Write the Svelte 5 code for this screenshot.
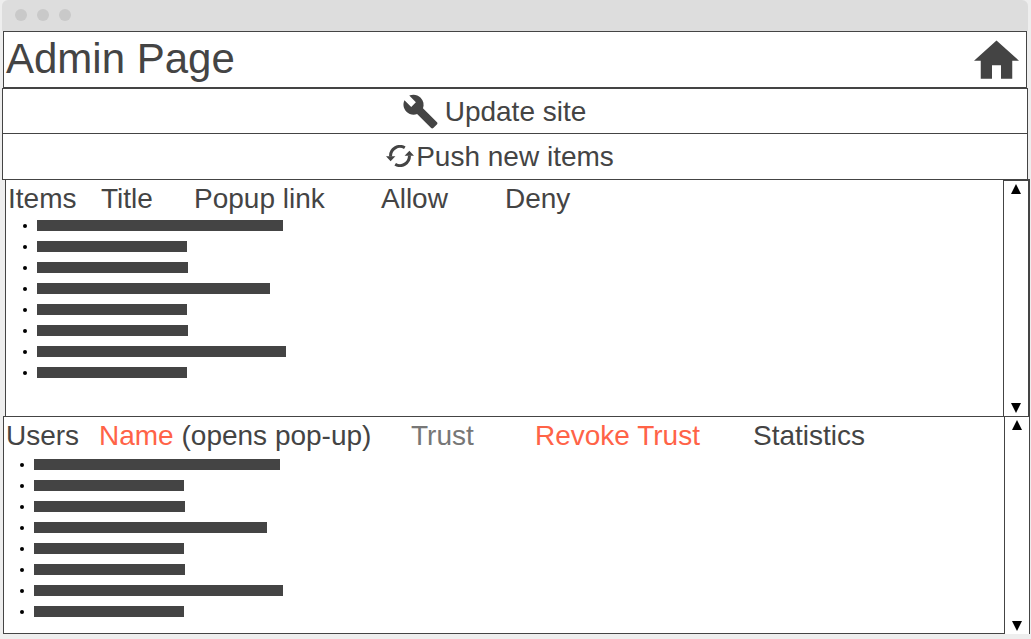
<script>
  const barWidths = [246, 150, 151, 233, 150, 151, 249, 150];
</script>

{#snippet scroller(label)}
  <div class="scroller">
    <button aria-label="Scroll {label} up">
      <svg viewBox="0 0 10 10"><path d="M5 0L10 10H0z" /></svg>
    </button>
    <button aria-label="Scroll {label} down">
      <svg viewBox="0 0 10 10"><path d="M5 10L10 0H0z" /></svg>
    </button>
  </div>
{/snippet}

{#snippet lines()}
  <ul>
    {#each barWidths as width}
      <li><span class="bar" style="width: {width}px"></span></li>
    {/each}
  </ul>
{/snippet}

<div class="window">
  <div class="titlebar"><i></i><i></i><i></i></div>

  <header>
    <h1>Admin Page</h1>
    <a href="#home" aria-label="Home">
      <svg class="home" viewBox="2 3 20 17"><path d="M10 20v-6h4v6h5v-8h3L12 3 2 12h3v8z" /></svg>
    </a>
  </header>

  <button class="action update">
    <svg class="wrench" viewBox="0 0 24 24">
      <path d="M22.7 19l-9.1-9.1c.9-2.3.4-5-1.5-6.9-2-2-5-2.4-7.4-1.3L9 6 6 9 1.6 4.7C.4 7.1.9 10.1 2.9 12.1c1.9 1.9 4.6 2.4 6.9 1.5l9.1 9.1c.4.4 1 .4 1.4 0l2.3-2.3c.5-.4.5-1.1.1-1.4z" />
    </svg>
    Update site
  </button>
  <button class="action push">
    <svg class="refresh" viewBox="0 0 28 22">
      <path class="arc" d="M4.6 11.5A9.4 9.4 0 0 1 18.8 2.8M23.4 10.5A9.4 9.4 0 0 1 9.2 19.2" />
      <path d="M0 11.3H9.4L4.6 16.3zM28 10.7H18.6L23.4 5.7z" />
    </svg>
    Push new items
  </button>

  <section class="items">
    <div class="content">
      <div class="columns">
        <h2>Items</h2>
        <span>Title</span>
        <span>Popup link</span>
        <span>Allow</span>
        <span>Deny</span>
      </div>
      {@render lines()}
    </div>
    {@render scroller("items")}
  </section>

  <section class="users">
    <div class="content">
      <div class="columns">
        <h2>Users</h2>
        <span><em>Name</em> (opens pop-up)</span>
        <span class="muted">Trust</span>
        <em>Revoke Trust</em>
        <span>Statistics</span>
      </div>
      {@render lines()}
    </div>
    {@render scroller("users")}
  </section>
</div>

<style>
  :global(body) {
    margin: 0;
    background: #eee;
  }

  .window {
    margin: 0 3px 0 2px;
    font: 28px/32px "Liberation Sans", Arial, sans-serif;
    color: #444;
  }

  .titlebar {
    display: flex;
    align-items: center;
    gap: 10px;
    height: 31px;
    padding: 0 0 1px 13px;
    box-sizing: border-box;
    background: #ddd;
    border-radius: 6px 6px 0 0;
  }

  .titlebar i {
    width: 12px;
    height: 12px;
    border-radius: 50%;
    background: #c9c9c9;
  }

  header {
    display: flex;
    justify-content: space-between;
    align-items: center;
    height: 55px;
    margin: 0 1px;
    padding: 0 7px 0 2px;
    background: #fff;
    border: 1px solid #444;
  }

  h1 {
    margin: 0;
    padding-bottom: 2px;
    font-size: 42px;
    line-height: 48px;
    font-weight: 400;
  }

  svg {
    display: block;
    fill: currentColor;
  }

  header a {
    color: inherit;
  }

  .home {
    width: 45px;
    height: 39px;
  }

  .action {
    display: flex;
    align-items: center;
    justify-content: center;
    width: 100%;
    height: 46px;
    box-sizing: border-box;
    padding: 0;
    background: #fff;
    border: 1px solid #444;
    border-radius: 0;
    font: inherit;
    color: inherit;
  }

  .update {
    gap: 6px;
    padding: 1px 42px 0 0;
  }

  .push {
    gap: 2px;
    height: 47px;
    margin-top: -1px;
    padding-right: 30px;
  }

  .wrench {
    width: 37px;
    height: 37px;
    margin-bottom: 1px;
  }

  .refresh {
    width: 28px;
    height: 22px;
    margin-bottom: 2px;
  }

  .arc {
    fill: none;
    stroke: currentColor;
    stroke-width: 3;
  }

  section {
    display: flex;
    background: #fff;
    border: 1px solid #444;
    margin-top: -1px;
  }

  .content {
    flex: 1;
  }

  .items {
    margin-left: 3px;
    margin-right: -2px;
  }

  .users {
    margin-left: 1px;
    margin-right: -2px;
    border-right: 0;
  }

  .columns {
    display: grid;
    white-space: nowrap;
  }

  .items .columns {
    grid-template-columns: 93px 93px 187px 124px auto;
    padding: 3px 0 5px 2px;
  }

  .users .columns {
    grid-template-columns: 93px 312px 124px 218px auto;
    padding: 3px 0 7px 2px;
  }

  h2 {
    margin: 0;
    font: inherit;
  }

  em {
    font-style: normal;
    color: #ff6347;
  }

  .muted {
    color: #777;
  }

  ul {
    list-style: none;
    margin: 0;
    padding: 0 0 0 17px;
  }

  .items ul {
    padding-bottom: 28px;
  }

  .users ul {
    padding-bottom: 6px;
    padding-left: 16px;
  }

  li {
    display: flex;
    align-items: center;
    gap: 10px;
    height: 11px;
    margin-bottom: 10px;
  }

  li::before {
    content: "";
    width: 4px;
    height: 4px;
    border-radius: 50%;
    background: #000;
  }

  .bar {
    height: 11px;
    background: #444;
  }

  .scroller {
    display: flex;
    flex-direction: column;
    justify-content: space-between;
    width: 24px;
    border: 1px solid #444;
  }

  .items .scroller {
    border-bottom: 0;
  }

  .users .scroller {
    margin: -1px 0 -2px;
    background: #fff;
  }

  .scroller button {
    display: flex;
    justify-content: center;
    padding: 3px 0;
    border: 0;
    background: #fff;
    color: #000;
  }

  .scroller svg {
    width: 10px;
    height: 10px;
  }
</style>
